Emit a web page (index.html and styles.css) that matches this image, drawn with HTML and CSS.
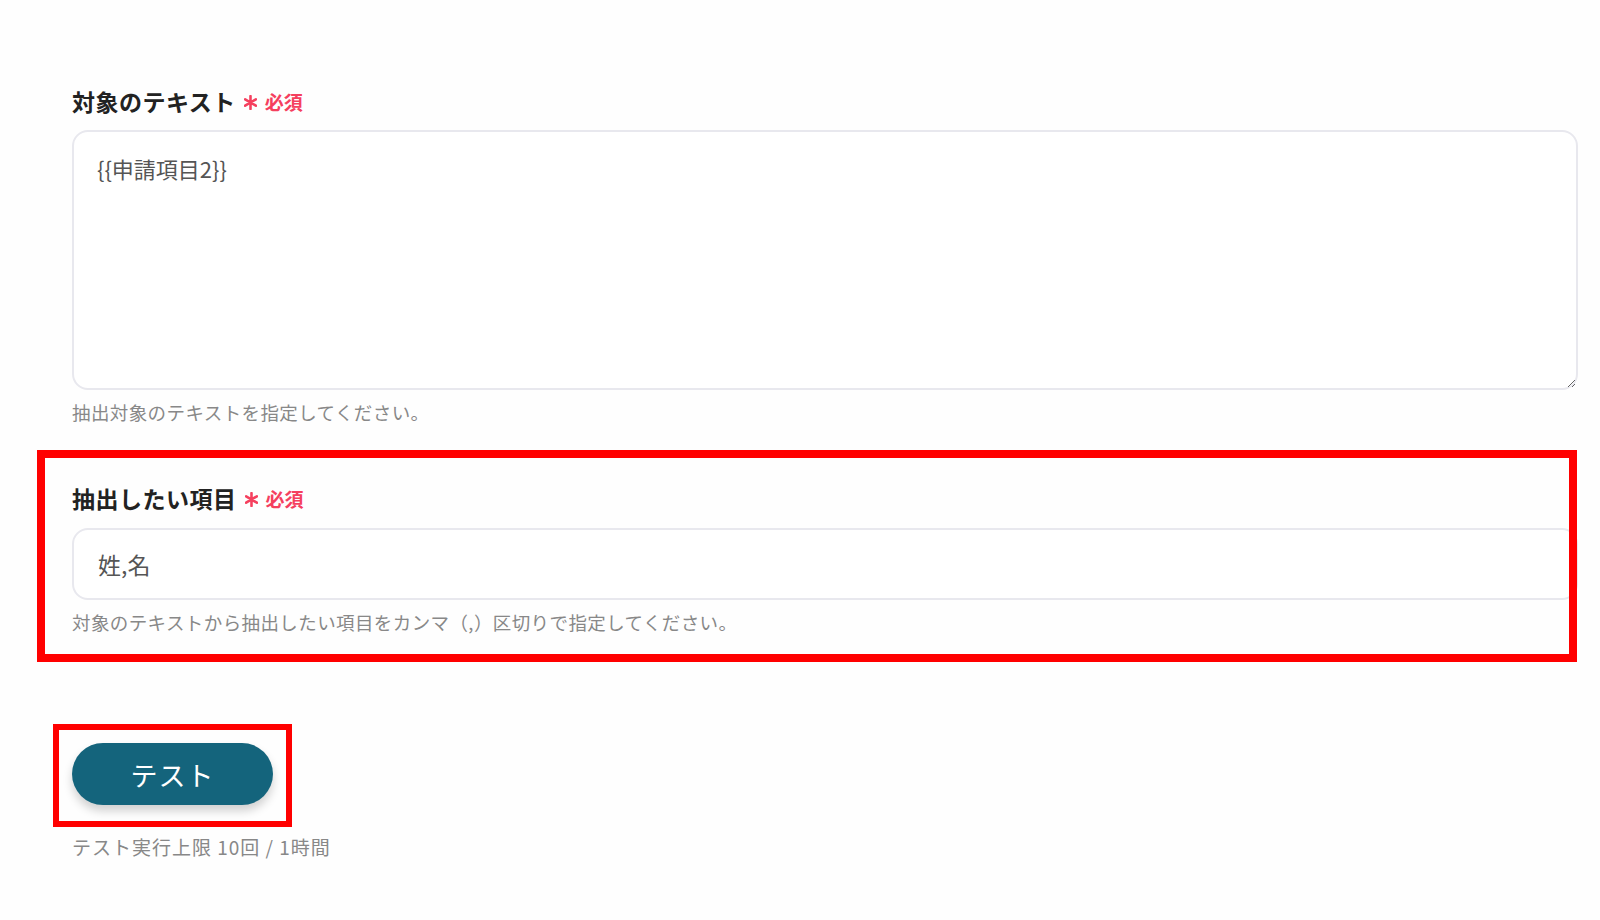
FILE: index.html
```html
<!DOCTYPE html>
<html lang="ja">

<head>
    <meta charset="UTF-8">
    <meta name="viewport" content="width=device-width, initial-scale=1.0">
    <title>テキスト抽出</title>
    <link rel="stylesheet" href="styles.css">
</head>

<body>
    <div class="form">
        <div class="field field-text">
            <label class="field-label">対象のテキスト<span class="required"><svg class="asterisk" viewBox="0 0 12 14"><path d="M6 1v12M1 4l10 6M1 10l10-6"/></svg>必須</span></label>
            <textarea class="textarea" readonly>{{申請項目2}}</textarea>
            <p class="hint">抽出対象のテキストを指定してください。</p>
        </div>

        <div class="field field-items">
            <label class="field-label">抽出したい項目<span class="required"><svg class="asterisk" viewBox="0 0 12 14"><path d="M6 1v12M1 4l10 6M1 10l10-6"/></svg>必須</span></label>
            <input class="input" type="text" value="姓,名" readonly>
            <p class="hint">対象のテキストから抽出したい項目をカンマ（,）区切りで指定してください。</p>
            <div class="highlight highlight-items"></div>
        </div>

        <div class="actions">
            <div class="btn-wrap">
                <button class="btn-test">テスト</button>
                <div class="highlight highlight-btn"></div>
            </div>
            <p class="hint limit">テスト実行上限 10回 / 1時間</p>
        </div>
    </div>
</body>

</html>
```

FILE: styles.css
```css
body {
    margin: 0;
    background: #fefefe;
    font-family: 'Noto Sans CJK JP', 'Noto Sans', sans-serif;
    color: #222;
}

.form {
    width: 1506px;
    padding: 86px 0 0 72px;
}

.field {
    position: relative;
}

.field-label {
    display: flex;
    align-items: center;
    height: 30px;
    font-size: 23px;
    font-weight: 700;
    letter-spacing: 0.5px;
    color: #222;
}

.required {
    display: inline-flex;
    align-items: center;
    margin-left: 8px;
    color: #f5405e;
    font-size: 19px;
    font-weight: 700;
    letter-spacing: 0;
}

.asterisk {
    width: 13px;
    height: 15px;
    margin-right: 8px;
    margin-top: 2px;
    fill: none;
    stroke: #f5405e;
    stroke-width: 2.4;
    stroke-linecap: round;
}

.textarea {
    display: block;
    box-sizing: border-box;
    width: 100%;
    height: 260px;
    margin-top: 14px;
    padding: 20px 23px;
    border: 2px solid #e8e8ee;
    border-radius: 16px;
    font-family: inherit;
    font-size: 22px;
    color: #555;
    background: #fff;
    resize: vertical;
    outline: none;
}

.input {
    display: block;
    box-sizing: border-box;
    width: 100%;
    height: 72px;
    margin-top: 15px;
    padding: 0 24px;
    border: 2px solid #e8e8ee;
    border-radius: 16px;
    font-family: inherit;
    font-size: 23px;
    color: #555;
    background: #fff;
    outline: none;
}

.hint {
    margin: 10px 0 0;
    font-size: 18.5px;
    line-height: 24px;
    letter-spacing: 0.4px;
    color: #888;
}

.field-items {
    margin-top: 59px;
}

.highlight {
    position: absolute;
    box-sizing: border-box;
    border: 8px solid #ff0000;
    pointer-events: none;
}

.highlight-items {
    top: -33px;
    left: -35px;
    width: 1540px;
    height: 212px;
}

.actions {
    margin-top: 109px;
}

.btn-wrap {
    position: relative;
    display: inline-block;
}

.btn-test {
    display: block;
    width: 201px;
    height: 62px;
    border: none;
    border-radius: 31px;
    background: #14647c;
    color: #fff;
    font-family: inherit;
    font-size: 27px;
    letter-spacing: 1px;
    box-shadow: 0 6px 10px rgba(0, 0, 0, 0.18);
    cursor: pointer;
}

.highlight-btn {
    top: -19px;
    left: -19px;
    width: 239px;
    height: 103px;
    border-width: 6px;
}

.limit {
    margin-top: 30px;
    font-size: 19px;
    letter-spacing: 1px;
}
```
